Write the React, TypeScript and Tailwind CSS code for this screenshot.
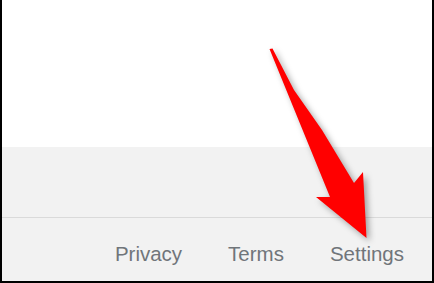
import React from 'react';

const links = ['Privacy', 'Terms', 'Settings'];

export default function App() {
  return (
    <div className="relative w-[434px] h-[283px] overflow-hidden bg-white border-x-2 border-b-2 border-black flex flex-col font-['Liberation_Sans',Arial,sans-serif]">
      {/* Blank page area */}
      <div className="h-[147px] bg-white" />

      {/* Footer */}
      <footer className="flex-1 bg-[#f2f2f2] flex flex-col">
        <div className="h-[71px] border-b border-[#dadada]" />
        <div className="flex justify-end gap-[46px] pr-[28px] pt-[24px]">
          {links.map(link => (
            <a key={link} className="text-[20.5px] leading-[23px] text-[#70757a] cursor-pointer">
              {link}
            </a>
          ))}
        </div>
      </footer>

      {/* Red callout arrow */}
      <svg
        className="absolute top-0 left-[-2px] pointer-events-none drop-shadow-[3px_3px_3px_rgba(0,0,0,0.35)]"
        width="434"
        height="283"
        viewBox="0 0 434 283"
      >
        <polygon
          points="269.5,49 272.5,48.5 294,90 322,130 354,183 363,172 366.5,238 316,197 330,197"
          fill="#ff0000"
        />
      </svg>
    </div>
  );
}
